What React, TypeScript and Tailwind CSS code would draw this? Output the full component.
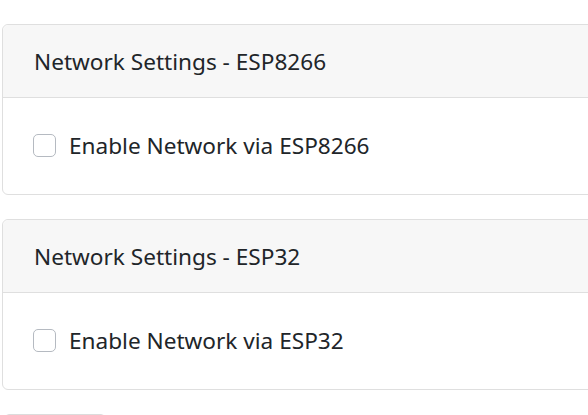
import React from "react";

function Card({ title, label }: { title: string; label: string }) {
  return (
    <div className="w-[660px] rounded-[6px] border border-[#dfdfdf] bg-white">
      <div className="flex h-[73px] items-center rounded-t-[6px] border-b border-[#dfdfdf] bg-[#f7f7f7] px-[31px] pt-[2px] text-[22.6px] text-[#212529]">
        {title}
      </div>
      <div className="flex h-[96px] items-center px-[30px] pb-[1px]">
        <span className="mr-[13px] block h-[23px] w-[23px] shrink-0 rounded-[5px] border border-[#b5bac1] bg-white" />
        <span className="text-[22.6px] text-[#212529]">{label}</span>
      </div>
    </div>
  );
}

export default function App() {
  return (
    <div
      className="h-[415px] w-full overflow-hidden bg-white pl-[2px] pt-[24px]"
      style={{ fontFamily: '"Noto Sans", "Open Sans", sans-serif' }}
    >
      <div className="flex flex-col gap-[24px]">
        <Card title="Network Settings - ESP8266" label="Enable Network via ESP8266" />
        <Card title="Network Settings - ESP32" label="Enable Network via ESP32" />
        <div className="ml-[3px] h-[40px] w-[100px] rounded-[4px] border border-[#dcdcdc]" />
      </div>
    </div>
  );
}
